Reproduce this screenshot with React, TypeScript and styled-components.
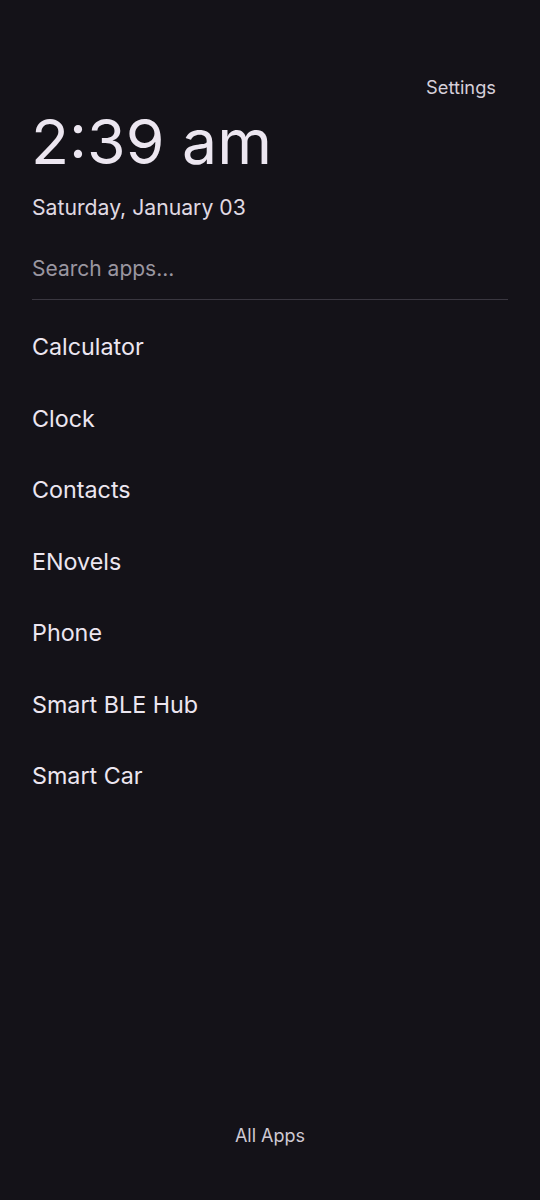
import styled, { createGlobalStyle } from 'styled-components'

const GlobalStyle = createGlobalStyle`
  html, body {
    margin: 0;
    padding: 0;
    background: #141218;
  }
  body {
    font-family: Inter, "Noto Sans", sans-serif;
    color: #e6e0e9;
  }
`

const Screen = styled.div`
  width: 540px;
  height: 1200px;
  box-sizing: border-box;
  display: flex;
  flex-direction: column;
  padding: 76px 32px 0 32px;
  background: #141218;
`

const TopBar = styled.div`
  display: flex;
  justify-content: flex-end;
  padding-right: 12px;
`

const SettingsLink = styled.span`
  font-size: 18.3px;
  line-height: 22px;
  color: #d6d0da;
`

const Time = styled.div`
  font-size: 62.5px;
  line-height: 72px;
  margin-top: 7px;
  margin-left: -1px;
  color: #ece6f0;
`

const DateLine = styled.div`
  font-size: 21.2px;
  line-height: 24px;
  margin-top: 18px;
  color: #e0dae3;
`

const SearchInput = styled.input`
  margin-top: 38px;
  width: 100%;
  box-sizing: border-box;
  background: transparent;
  border: none;
  border-bottom: 1px solid #3a3740;
  outline: none;
  padding: 0 0 18px 0;
  font-family: Inter, "Noto Sans", sans-serif;
  font-size: 21px;
  line-height: 24px;
  color: #e6e0e9;

  &::placeholder {
    color: #9a96a0;
  }
`

const AppList = styled.ul`
  list-style: none;
  margin: 11px 0 0 0;
  padding: 0;
  display: flex;
  flex-direction: column;
`

const AppItem = styled.li`
  height: 71.5px;
  display: flex;
  align-items: center;
  font-size: 23.3px;
  color: #ece6f0;
`

const Footer = styled.div`
  margin-top: auto;
  padding-bottom: 54px;
  text-align: center;
  font-size: 18px;
  color: #cfc9d3;
`

const apps = ['Calculator', 'Clock', 'Contacts', 'ENovels', 'Phone', 'Smart BLE Hub', 'Smart Car']

export default function App() {
  return (
    <>
      <GlobalStyle />
      <Screen>
        <TopBar>
          <SettingsLink>Settings</SettingsLink>
        </TopBar>
        <Time>2:39 am</Time>
        <DateLine>Saturday, January 03</DateLine>
        <SearchInput placeholder="Search apps..." />
        <AppList>
          {apps.map((name) => (
            <AppItem key={name}>{name}</AppItem>
          ))}
        </AppList>
        <Footer>All Apps</Footer>
      </Screen>
    </>
  )
}
